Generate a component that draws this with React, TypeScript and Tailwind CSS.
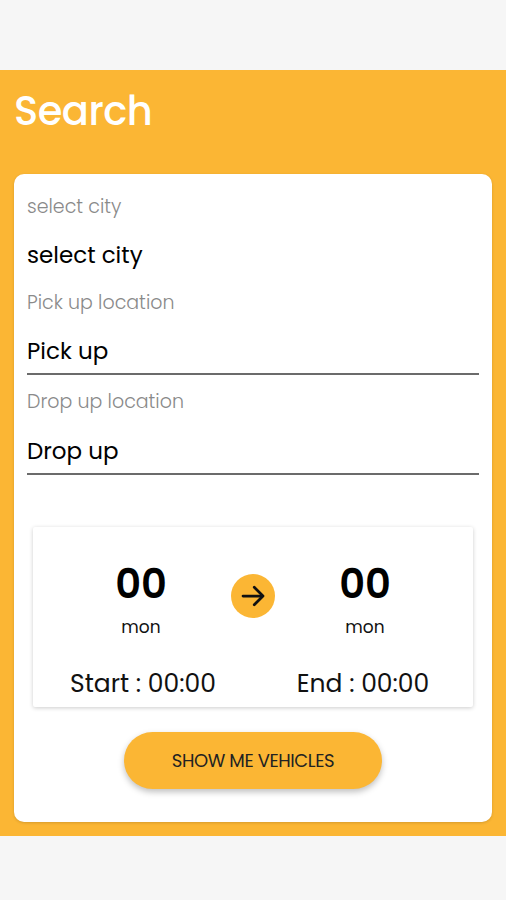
import React from "react";

export default function App() {
  const font = { fontFamily: '"Poppins", "Inter", "Noto Sans", sans-serif' };
  return (
    <div className="w-[506px] h-[900px] bg-[#f6f6f6] flex flex-col" style={font}>
      <div className="h-[70px]" />
      <div className="bg-[#fbb634] h-[766px] px-[14px] flex flex-col">
        <div className="h-[104px] pt-[18px] text-white text-[40px] font-medium leading-[46px] tracking-[-0.5px]">Search</div>
        <div className="bg-white rounded-[10px] h-[648px] shadow-[0_1px_3px_rgba(0,0,0,0.15)] px-[13px] flex flex-col">
          <div className="pt-[21px] text-[19px] leading-[24px] text-[#8a8a8a] font-light">select city</div>
          <div className="mt-[22px] text-[23px] leading-[28px] text-black">select city</div>
          <div className="mt-[22px] text-[19px] leading-[24px] text-[#8a8a8a] font-light">Pick up location</div>
          <div className="mt-[22px] text-[23px] leading-[28px] text-black">Pick up</div>
          <div className="mt-[8px] h-[2px] bg-[#6b6b6b]" />
          <div className="mt-[15px] text-[19px] leading-[24px] text-[#8a8a8a] font-light">Drop up location</div>
          <div className="mt-[23px] text-[23px] leading-[28px] text-black">Drop up</div>
          <div className="mt-[8px] h-[2px] bg-[#6b6b6b]" />
          <div className="mt-[52px] mx-[6px] h-[180px] bg-white shadow-[0_1px_4px_rgba(0,0,0,0.2)] rounded-[2px] flex flex-col">
            <div className="flex items-start pt-[35px]">
              <div className="w-[216px] flex flex-col items-center">
                <div className="text-[40px] font-semibold leading-[44px] text-black">00</div>
                <div className="mt-[10px] text-[17px] leading-[22px] text-[#111]">mon</div>
              </div>
              <div className="w-[8px] flex justify-center">
                <div className="mt-[12px] w-[44px] h-[44px] shrink-0 rounded-full bg-[#fbb634] flex items-center justify-center">
                  <svg width="30" height="30" viewBox="0 0 24 24" fill="none" stroke="#111" strokeWidth="2.2" strokeLinecap="round" strokeLinejoin="round">
                    <path d="M4 12h15" />
                    <path d="M13 5l7 7-7 7" />
                  </svg>
                </div>
              </div>
              <div className="w-[216px] flex flex-col items-center">
                <div className="text-[40px] font-semibold leading-[44px] text-black">00</div>
                <div className="mt-[10px] text-[17px] leading-[22px] text-[#111]">mon</div>
              </div>
            </div>
            <div className="flex mt-[30px]">
              <div className="w-[220px] text-center text-[25px] leading-[32px] text-[#111]">Start : 00:00</div>
              <div className="w-[220px] text-center text-[25px] leading-[32px] text-[#111]">End : 00:00</div>
            </div>
          </div>
          <div className="mt-[25px] flex justify-center">
            <div className="w-[258px] h-[57px] rounded-full bg-[#fbb634] shadow-[0_3px_6px_rgba(0,0,0,0.25)] flex items-center justify-center text-[18px] text-[#222] tracking-[-0.4px]">
              SHOW ME VEHICLES
            </div>
          </div>
        </div>
      </div>
      <div className="flex-1 bg-[#f6f6f6]" />
    </div>
  );
}
